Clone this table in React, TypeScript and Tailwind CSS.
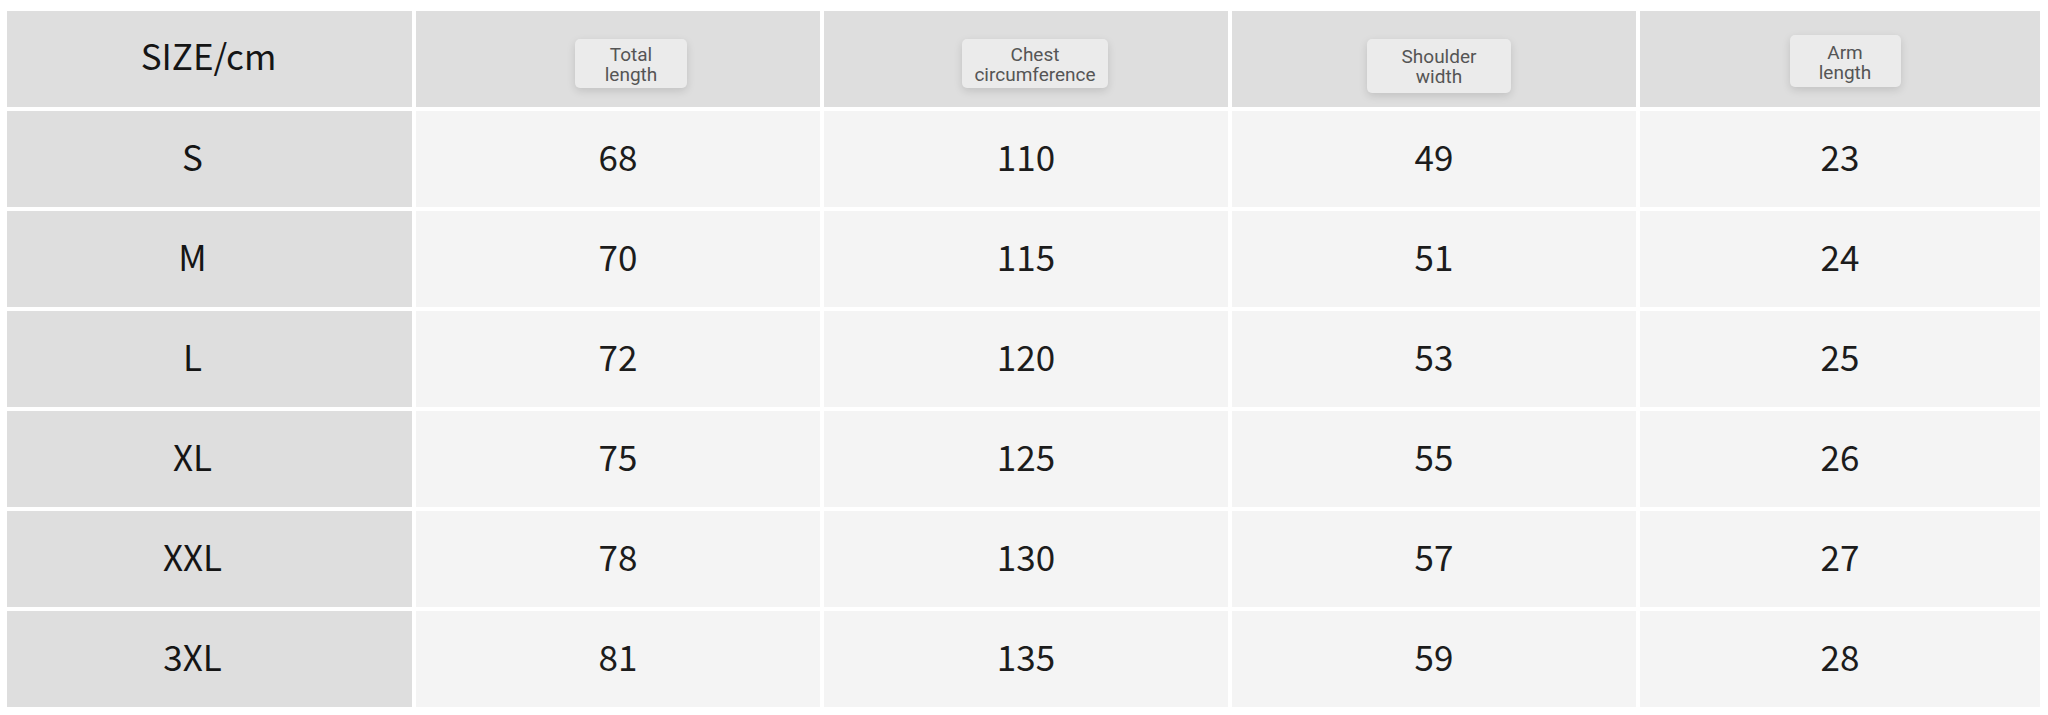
import React from 'react';

type Row = { size: string; values: number[] };

const rows: Row[] = [
  { size: 'S', values: [68, 110, 49, 23] },
  { size: 'M', values: [70, 115, 51, 24] },
  { size: 'L', values: [72, 120, 53, 25] },
  { size: 'XL', values: [75, 125, 55, 26] },
  { size: 'XXL', values: [78, 130, 57, 27] },
  { size: '3XL', values: [81, 135, 59, 28] },
];

// header chips; widths / nudges read off the screenshot
const headers = [
  { top: 'Total', bottom: 'length', cls: 'w-[112px] h-[49px] ml-[26px] mt-[8px]' },
  { top: 'Chest', bottom: 'circumference', cls: 'w-[146px] h-[49px] ml-[18px] mt-[8px]' },
  { top: 'Shoulder', bottom: 'width', cls: 'w-[144px] h-[54px] ml-[10px] mt-[13px]' },
  { top: 'Arm', bottom: 'length', cls: 'w-[111px] h-[52px] ml-[10px] mt-[4px]' },
];

const numFont = "font-['Noto_Sans_CJK_SC','Noto_Sans',sans-serif]";

export default function App() {
  return (
    <div className="w-[2048px] h-[715px] bg-white pl-[7px] pt-[11px]">
      <div className="grid grid-cols-[405px_404px_404px_404px_400px] grid-rows-[repeat(7,96px)] gap-[4px]">
        {/* header row */}
        <div className={`bg-[#dedede] flex items-center justify-center pb-[8px] pr-[2px] ${numFont} text-[35px] text-[#151515]`}>
          SIZE/cm
        </div>
        {headers.map((h) => (
          <div key={h.top} className="bg-[#dedede] flex items-center justify-center">
            <div
              className={`${h.cls} bg-[#ebebeb] rounded-[5px] shadow-[0_3px_8px_rgba(0,0,0,0.13)] flex flex-col items-center justify-center pt-[3px] font-['Roboto',sans-serif] text-[19px] leading-[20px] text-[#555555]`}
            >
              <span>{h.top}</span>
              <span>{h.bottom}</span>
            </div>
          </div>
        ))}

        {/* size rows */}
        {rows.map((r) => (
          <React.Fragment key={r.size}>
            <div className={`bg-[#dedede] flex items-center justify-center pr-[34px] pb-[6px] ${numFont} text-[35px] text-[#151515]`}>
              {r.size}
            </div>
            {r.values.map((v, i) => (
              <div
                key={i}
                className={`bg-[#f4f4f4] flex items-center justify-center pb-[6px] ${numFont} text-[35px] text-[#1c1c1c]`}
              >
                {v}
              </div>
            ))}
          </React.Fragment>
        ))}
      </div>
    </div>
  );
}
